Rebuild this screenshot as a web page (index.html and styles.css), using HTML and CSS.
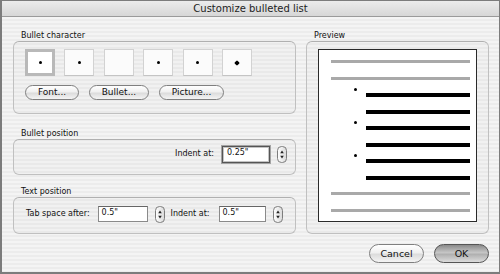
FILE: index.html
```html
<!DOCTYPE html>
<html lang="en">
<head>
    <meta charset="UTF-8">
    <title>Customize bulleted list</title>
    <link rel="stylesheet" href="styles.css">
</head>
<body>
    <div class="window">
        <div class="titlebar">Customize bulleted list</div>
        <div class="dialog">
            <div class="columns">
                <div class="left-col">
                    <div class="group-label">Bullet character</div>
                    <div class="group-box chars-box">
                        <div class="char-row">
                            <div class="char-cell selected"><span class="dot"></span></div>
                            <div class="char-cell"><span class="dot"></span></div>
                            <div class="char-cell"></div>
                            <div class="char-cell"><span class="dot"></span></div>
                            <div class="char-cell"><span class="dot"></span></div>
                            <div class="char-cell"><span class="dot big"></span></div>
                        </div>
                        <div class="button-row">
                            <button class="btn small">Font...</button>
                            <button class="btn small">Bullet...</button>
                            <button class="btn small">Picture...</button>
                        </div>
                    </div>

                    <div class="group-label spaced">Bullet position</div>
                    <div class="group-box field-box bullet-pos">
                        <label class="field-label">Indent at:</label>
                        <div class="text-field focused">0.25"</div>
                        <svg class="stepper" width="10" height="17" viewBox="0 0 10 17">
                            <defs>
                                <linearGradient id="stepGrad" x1="0" y1="0" x2="1" y2="0">
                                    <stop offset="0" stop-color="#ffffff"/>
                                    <stop offset="1" stop-color="#d9d9d9"/>
                                </linearGradient>
                            </defs>
                            <rect x="0.5" y="0.5" width="9" height="16" rx="4" fill="url(#stepGrad)" stroke="#7d7d7d"/>
                            <path d="M3.2 7.2 L6.8 7.2 L5 4.6 Z" fill="#222"/>
                            <path d="M3.2 9.8 L6.8 9.8 L5 12.4 Z" fill="#222"/>
                        </svg>
                    </div>

                    <div class="group-label spaced-small">Text position</div>
                    <div class="group-box field-box text-pos">
                        <label class="field-label">Tab space after:</label>
                        <div class="text-field wide">0.5"</div>
                        <svg class="stepper" width="10" height="17" viewBox="0 0 10 17">
                            <rect x="0.5" y="0.5" width="9" height="16" rx="4" fill="url(#stepGrad)" stroke="#7d7d7d"/>
                            <path d="M3.2 7.2 L6.8 7.2 L5 4.6 Z" fill="#222"/>
                            <path d="M3.2 9.8 L6.8 9.8 L5 12.4 Z" fill="#222"/>
                        </svg>
                        <label class="field-label second">Indent at:</label>
                        <div class="text-field">0.5"</div>
                        <svg class="stepper" width="10" height="17" viewBox="0 0 10 17">
                            <rect x="0.5" y="0.5" width="9" height="16" rx="4" fill="url(#stepGrad)" stroke="#7d7d7d"/>
                            <path d="M3.2 7.2 L6.8 7.2 L5 4.6 Z" fill="#222"/>
                            <path d="M3.2 9.8 L6.8 9.8 L5 12.4 Z" fill="#222"/>
                        </svg>
                    </div>
                </div>

                <div class="right-col">
                    <div class="group-label">Preview</div>
                    <div class="group-box preview-box">
                        <div class="preview-page">
                            <div class="pv-row"><span class="pv-line gray"></span></div>
                            <div class="pv-row"><span class="pv-line gray"></span></div>
                            <div class="pv-row"><span class="pv-dot"></span><span class="pv-line black"></span></div>
                            <div class="pv-row"><span class="pv-line black indent"></span></div>
                            <div class="pv-row"><span class="pv-dot"></span><span class="pv-line black"></span></div>
                            <div class="pv-row"><span class="pv-line black indent"></span></div>
                            <div class="pv-row"><span class="pv-dot"></span><span class="pv-line black"></span></div>
                            <div class="pv-row"><span class="pv-line black indent"></span></div>
                            <div class="pv-row"><span class="pv-line gray"></span></div>
                            <div class="pv-row"><span class="pv-line gray"></span></div>
                        </div>
                    </div>
                </div>
            </div>

            <div class="footer">
                <button class="btn large">Cancel</button>
                <button class="btn large default">OK</button>
            </div>
        </div>
    </div>
</body>
</html>
```

FILE: styles.css
```css
body {
    margin: 0;
    font-family: "DejaVu Sans", Verdana, sans-serif;
    color: #111;
    background: #fff;
}

.window {
    width: 500px;
    height: 274px;
    box-sizing: border-box;
    border: 1px solid #7c7c7c;
    border-left-width: 2px;
    border-bottom-width: 2px;
    display: flex;
    flex-direction: column;
}

.titlebar {
    height: 16px;
    box-sizing: border-box;
    border-bottom: 1px solid #9a9a9a;
    background: linear-gradient(#ececec, #d6d6d6);
    text-align: center;
    font-size: 10px;
    line-height: 15px;
    color: #1e1e1e;
}

.dialog {
    flex: 1;
    padding: 13px 10px 0 11px;
    background: repeating-linear-gradient(#f4f4f4 0, #f4f4f4 2px, #ececec 2px, #ececec 4px);
}

.columns {
    display: flex;
    gap: 10px;
}

.left-col {
    width: 283px;
}

.right-col {
    width: 183px;
}

.group-label {
    font-size: 8px;
    line-height: 11px;
    height: 11px;
    padding-left: 8px;
}

.group-label.spaced {
    margin-top: 14px;
}

.group-label.spaced-small {
    margin-top: 11px;
}

.group-box {
    box-sizing: border-box;
    border: 1px solid #c0c0c0;
    border-top-color: #b0b0b0;
    border-radius: 6px;
    background: rgba(0, 0, 0, 0.012);
}

/* bullet character */
.chars-box {
    height: 73px;
    padding: 7px 11px 0;
}

.char-row {
    display: flex;
    gap: 9.4px;
}

.char-cell {
    width: 30px;
    height: 27px;
    box-sizing: border-box;
    border: 1px solid #d2d2d2;
    border-bottom-color: #c4c4c4;
    background: #fbfbfb;
    display: flex;
    align-items: center;
    justify-content: center;
}

.char-cell.selected {
    border: 3px solid #b9b9b9;
    background: #fff;
}

.dot {
    width: 3px;
    height: 3px;
    border-radius: 50%;
    background: #000;
}

.dot.big {
    width: 4px;
    height: 4px;
    border-radius: 1px;
    transform: rotate(45deg);
}

.button-row {
    display: flex;
    gap: 9.5px;
    margin-top: 9px;
}

.btn {
    font-family: "DejaVu Sans", Verdana, sans-serif;
    color: #111;
    border: 1px solid #7f7f7f;
    border-radius: 10px;
    background: linear-gradient(#ffffff, #f0f0f0 45%, #dcdcdc 55%, #f4f4f4);
    padding: 0;
    margin: 0;
}

.btn.small {
    height: 15px;
    font-size: 9px;
    line-height: 13px;
    padding: 0 12px;
}

.btn.large {
    height: 19px;
    width: 55px;
    font-size: 9.5px;
    line-height: 17px;
}

.btn.default {
    border-color: #555;
    background: linear-gradient(#8a8a8a, #c6c6c6 45%, #b0b0b0 55%, #dcdcdc);
}

/* field rows */
.field-box {
    display: flex;
    align-items: flex-start;
    padding-right: 8px;
}

.bullet-pos {
    height: 36px;
    padding-top: 6px;
    justify-content: flex-end;
}

.text-pos {
    height: 37px;
    padding-top: 8px;
    padding-left: 12px;
}

.field-label {
    font-size: 8px;
    line-height: 16px;
    margin-right: 8px;
}

.field-label.second {
    margin-left: 6px;
    margin-right: 9px;
}

.text-field {
    width: 47px;
    height: 16px;
    box-sizing: border-box;
    border: 1px solid #8a8a8a;
    border-top-color: #666;
    background: #fff;
    font-size: 8px;
    line-height: 12px;
    padding-left: 3px;
    margin-right: 7px;
}

.text-field.wide {
    width: 50px;
}

.text-field.focused {
    width: 48px;
    height: 17px;
    border: 1px solid #555;
    box-shadow: 0 0 0 1px #a3a3a3, inset 0 0 0 1px #c4c4c4;
    padding-left: 4px;
}

.stepper {
    display: block;
}

/* preview */
.preview-box {
    height: 193px;
    padding: 7px 11px;
}

.preview-page {
    height: 173px;
    box-sizing: border-box;
    border: 1px solid #2a2a2a;
    background: #fff;
    padding-top: 5px;
}

.pv-row {
    display: flex;
    align-items: flex-start;
    height: 16.5px;
}

.pv-line {
    flex: 1;
    margin-top: 5px;
    margin-right: 6px;
}

.pv-line.gray {
    height: 3px;
    margin-left: 12px;
    background: #a9a9a9;
}

.pv-line.black {
    height: 4px;
    margin-left: 9px;
    background: #000;
}

.pv-line.black.indent {
    margin-left: 47px;
}

.pv-dot {
    width: 3px;
    height: 3px;
    margin-left: 35px;
    border-radius: 50%;
    background: #000;
}

.footer {
    display: flex;
    justify-content: flex-end;
    gap: 10px;
    margin-top: 10px;
}
```
